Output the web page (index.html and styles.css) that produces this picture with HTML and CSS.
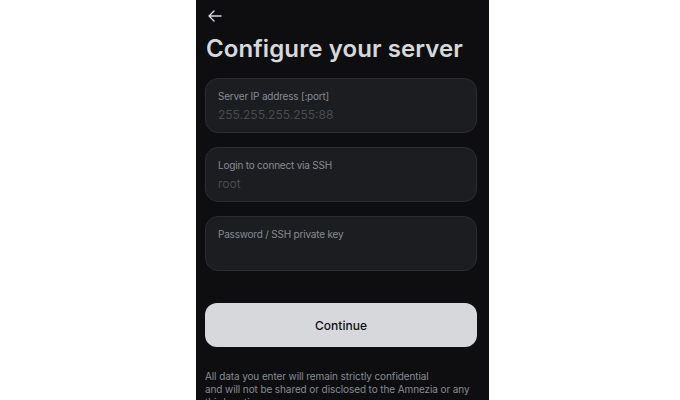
FILE: index.html
```html
<!DOCTYPE html>
<html lang="en">
<head>
    <meta charset="UTF-8">
    <meta name="viewport" content="width=device-width, initial-scale=1.0">
    <title>Configure your server</title>
    <link rel="stylesheet" href="styles.css">
</head>
<body>
    <div class="screen">
        <div class="back">
            <svg width="16" height="16" viewBox="0 0 16 16" fill="none" stroke="#d7d8db" stroke-width="1.4" stroke-linecap="round" stroke-linejoin="round">
                <path d="M14 8H2M7 3L2 8l5 5"/>
            </svg>
        </div>
        <h1 class="title">Configure your server</h1>

        <div class="field">
            <div class="label">Server IP address [:port]</div>
            <div class="value">255.255.255.255:88</div>
        </div>
        <div class="field">
            <div class="label">Login to connect via SSH</div>
            <div class="value">root</div>
        </div>
        <div class="field">
            <div class="label">Password / SSH private key</div>
            <div class="value"></div>
        </div>

        <button class="continue">Continue</button>

        <p class="note">All data you enter will remain strictly confidential<br>and will not be shared or disclosed to the Amnezia or any third parties</p>
    </div>
</body>
</html>
```

FILE: styles.css
```css
html, body {
    margin: 0;
    height: 100%;
    overflow: hidden;
}

body {
    background: #ffffff;
    font-family: Inter, "Noto Sans", sans-serif;
}

.screen {
    width: 293px;
    height: 400px;
    margin-left: 196px;
    background: #0e0e11;
    box-sizing: border-box;
    padding: 0 12px 0 9px;
}

.back {
    height: 16px;
    padding-top: 8px;
    padding-left: 2px;
}

.title {
    margin: 10px 0 0 1px;
    font-size: 24px;
    font-weight: 600;
    color: #d7d8db;
    line-height: 30px;
    letter-spacing: 0.1px;
}

.field {
    height: 55px;
    margin-top: 14px;
    box-sizing: border-box;
    border: 1px solid #2c2d30;
    border-radius: 13px;
    background: #1c1d21;
    padding: 11px 12px 0 12px;
}

.field:first-of-type {
    margin-top: 13px;
}

.label {
    font-size: 10px;
    color: #878b91;
    line-height: 13px;
    letter-spacing: -0.2px;
}

.value {
    font-size: 12px;
    color: #494b50;
    line-height: 18px;
    margin-top: 3px;
}

.continue {
    display: block;
    width: 100%;
    height: 44px;
    margin-top: 32px;
    border: none;
    border-radius: 12px;
    background: #d7d8db;
    color: #0e0e11;
    font-family: Inter, "Noto Sans", sans-serif;
    font-size: 12px;
    font-weight: 500;
}

.note {
    margin: 23px 0 0 0;
    font-size: 10px;
    line-height: 13px;
    letter-spacing: -0.1px;
    color: #878b91;
}
```
